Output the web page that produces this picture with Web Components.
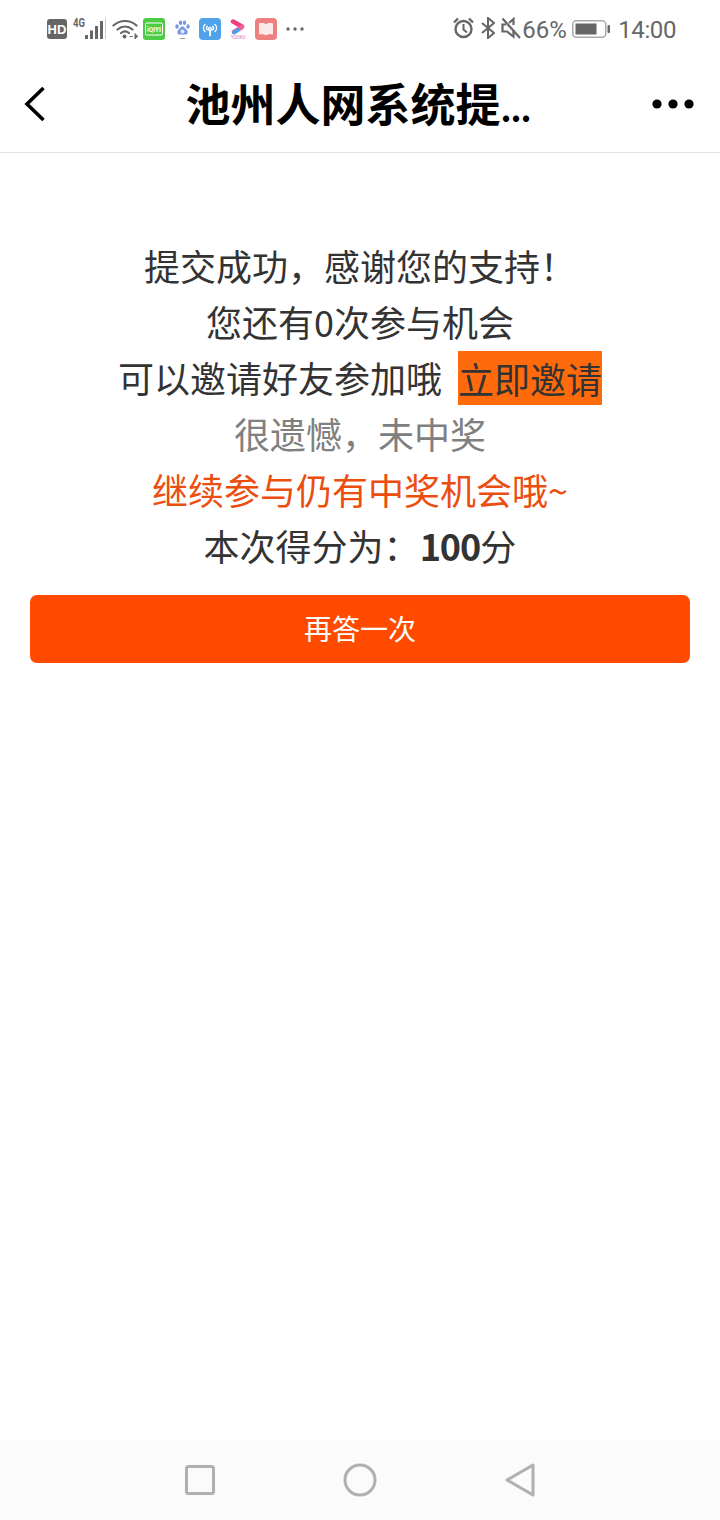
<!DOCTYPE html>
<html lang="zh">
<head>
<meta charset="utf-8">
<title>提交成功</title>
<style>
  html, body { margin: 0; padding: 0; background: #fff; }
  body { width: 720px; height: 1520px; display: flex; flex-direction: column; font-family: "Noto Sans CJK SC", "Noto Sans", sans-serif; overflow: hidden; }
  result-panel { flex: 1; }
  b { letter-spacing: -1px; }
</style>
</head>
<body>
<status-bar></status-bar>
<nav-bar>池州人网系统提<span style="font-size:34px;letter-spacing:-1px">...</span></nav-bar>
<result-panel>
  <result-line>提交成功&#xFF0C;感谢您的支持&#xFF01;</result-line>
  <result-line>您还有0次参与机会</result-line>
  <result-line>可以邀请好友参加哦&nbsp;&nbsp;<invite-tag>立即邀请</invite-tag></result-line>
  <result-line tone="muted">很遗憾&#xFF0C;未中奖</result-line>
  <result-line tone="accent">继续参与仍有中奖机会哦~</result-line>
  <result-line>本次得分为&#xFF1A;<b>100</b>分</result-line>
  <action-button slot="action">再答一次</action-button>
</result-panel>
<soft-keys></soft-keys>

<script>
class StatusBar extends HTMLElement {
  constructor() {
    super();
    this.attachShadow({ mode: 'open' });
    this.shadowRoot.innerHTML = `
      <style>
        :host { display: flex; box-sizing: border-box; height: 56px; padding: 0 44px 0 47px; align-items: flex-start; justify-content: space-between; color: #666; font-family: "Roboto", "Noto Sans", sans-serif; }
        .side { display: flex; align-items: flex-start; padding-top: 16px; }
        svg { display: block; flex: none; }
        .txt { font-size: 24px; line-height: 26px; height: 26px; margin-top: 1px; }
      </style>
      <div class="side">
        <!-- HD -->
        <svg width="20" height="20" style="margin-top:3px"><rect width="20" height="20" rx="3" fill="#666"/><text x="10" y="15" text-anchor="middle" font-size="13" font-weight="700" fill="#fff" font-family="Liberation Sans">HD</text></svg>
        <!-- 4G + signal -->
        <svg width="34" height="24" style="margin-left:5px;margin-top:1px">
          <text x="1" y="10" font-size="12" font-weight="700" fill="#666" font-family="Roboto" textLength="12" lengthAdjust="spacingAndGlyphs">4G</text>
          <rect x="13" y="18" width="3" height="4" fill="#666"/><rect x="18" y="13.500" width="3" height="8.500" fill="#666"/><rect x="23" y="9" width="3" height="13" fill="#666"/><rect x="28" y="4" width="3" height="18" fill="#666"/><rect x="33" y="1" width="1.500" height="21" fill="#ccc"/>
        </svg>
        <!-- wifi -->
        <svg width="26" height="22" style="margin-left:6px;margin-top:2px" fill="none" stroke="#666" stroke-width="2.200" stroke-linecap="round">
          <path d="M1.500 7.500C8 1.500 18 1.500 24.500 7.500"/><path d="M5.500 11.500C10 7.500 16 7.500 20.500 11.500"/><path d="M9 15C11.500 13 14.500 13 17 15"/>
          <circle cx="12.500" cy="18.500" r="2" fill="#666" stroke="none"/><path d="M18 18.500h2.500M23 16v5l2.500-2.500z" stroke-width="1" fill="#666"/>
        </svg>
        <!-- iqiyi -->
        <svg width="22" height="22" style="margin-left:5px;margin-top:2px"><rect width="22" height="22" rx="3" fill="#4fcc46"/><rect x="2.500" y="5" width="17" height="12" rx="1.500" fill="none" stroke="#fff" stroke-width="1"/><text x="11" y="14" text-anchor="middle" font-size="8" font-weight="700" fill="#fff" font-family="Roboto" textLength="14" lengthAdjust="spacingAndGlyphs">iQIYI</text></svg>
        <!-- baidu paw -->
        <svg width="15" height="20" style="margin-left:10px;margin-top:4px" fill="#7a97e2">
          <ellipse cx="2" cy="6.500" rx="1.700" ry="2.200"/><ellipse cx="5.500" cy="2.800" rx="1.700" ry="2.300"/><ellipse cx="9.500" cy="2.800" rx="1.700" ry="2.300"/><ellipse cx="13" cy="6.500" rx="1.700" ry="2.200"/>
          <path d="M7.500 6.500c-2 0-2.500 2-4 3.200C1.800 11 1.800 14.500 4.500 14.500h6c2.700 0 2.700-3.500 1-4.800C10 8.500 9.500 6.500 7.500 6.500z"/>
          <circle cx="7.500" cy="11.500" r="2" fill="#dfe7fa"/><rect x="5" y="18" width="5" height="1" fill="#999"/>
        </svg>
        <!-- wifi key -->
        <svg width="22" height="22" style="margin-left:9px;margin-top:2px"><rect width="22" height="22" rx="4" fill="#4fa3ea"/><g fill="none" stroke="#fff" stroke-width="1.400" stroke-linecap="round"><path d="M6 6.500c-2 2-2 5 0 7M16 6.500c2 2 2 5 0 7M8.300 8.200c-1 1-1 2.600 0 3.600M13.700 8.200c1 1 1 2.600 0 3.600"/><circle cx="11" cy="11" r="1.500"/><path d="M11 12.500v5" stroke-width="1.800"/></g></svg>
        <!-- youku -->
        <svg width="18" height="20" style="margin-left:8px;margin-top:3px" fill="none">
          <path d="M4 2.500L13 7.500" stroke="#ef3f7f" stroke-width="4.500" stroke-linecap="round"/><path d="M13 8L5 13" stroke="#f0609a" stroke-width="4.500" stroke-linecap="round"/><path d="M9 11L5 13.500" stroke="#3aa4f0" stroke-width="3.500" stroke-linecap="round"/>
          <text x="9" y="19.500" text-anchor="middle" font-size="4.500" fill="#c86fb0" font-family="Roboto">YOUKU</text>
        </svg>
        <!-- reader book -->
        <svg width="22" height="22" style="margin-left:8px;margin-top:2px"><rect width="22" height="22" rx="4" fill="#ee8080"/><path d="M4 5.500c3-.8 5.500-.5 7 1 1.500-1.500 4-1.800 7-1v11c-3-.6-5.500-.3-7 1-1.500-1.300-4-1.600-7-1z" fill="#fbeaea"/></svg>
        <!-- overflow -->
        <svg width="18" height="6" style="margin-left:9px;margin-top:10px" fill="#666"><circle cx="2" cy="3" r="1.700"/><circle cx="9" cy="3" r="1.700"/><circle cx="16" cy="3" r="1.700"/></svg>
      </div>
      <div class="side">
        <!-- alarm -->
        <svg width="21" height="22" style="margin-top:1px" fill="none" stroke="#666" stroke-width="2.400">
          <circle cx="10.500" cy="12" r="8"/><path d="M10.500 7v5.500l3.500 3" stroke-width="2"/><path d="M1 5.500L5 1.500M20 5.500L16 1.500"/>
        </svg>
        <!-- bluetooth -->
        <svg width="14" height="22" style="margin-left:7px;margin-top:1px" fill="none" stroke="#666" stroke-width="2">
          <path d="M1 6l12 10-6 5V1l6 5L1 16"/>
        </svg>
        <!-- muted speaker -->
        <svg width="20" height="22" style="margin-left:6px;margin-top:1px" fill="none" stroke="#666" stroke-width="2.200">
          <path d="M5 7.500H1.500v7H6l6.500 5V13M12.500 8V2L8 6"/><path d="M1.500 1.500l17.500 19.500"/>
        </svg>
        <span class="txt" style="margin-left:1px;width:43px">66%</span>
        <!-- battery -->
        <svg width="38" height="18" style="margin-left:7px;margin-top:4px">
          <rect x=".75" y=".75" width="33" height="16.500" rx="3.500" fill="#fff" stroke="#aaa" stroke-width="1.500"/>
          <rect x="3.500" y="3.500" width="21" height="11" fill="#666"/>
          <rect x="35.500" y="5" width="2.500" height="8" rx="1" fill="#666"/>
        </svg>
        <span class="txt" style="margin-left:8px;letter-spacing:-.4px">14:00</span>
      </div>
    `;
  }
}

class NavBar extends HTMLElement {
  constructor() {
    super();
    this.attachShadow({ mode: 'open' });
    this.shadowRoot.innerHTML = `
      <style>
        :host { display: grid; grid-template-columns: 100px 1fr 100px; align-items: center; box-sizing: border-box; height: 97px; border-bottom: 1px solid #e2e2e2; color: #000; }
        .back { padding-left: 24px; display: flex; }
        .more { padding-right: 26px; display: flex; justify-content: flex-end; }
        .title { text-align: center; font-size: 45px; font-weight: 700; line-height: 94px; height: 96px; padding-right: 4px; white-space: nowrap; }
        svg { display: block; }
      </style>
      <div class="back"><svg width="22" height="36" fill="none" stroke="#000" stroke-width="3.600"><path d="M19.500 2L3 18l16.500 16"/></svg></div>
      <div class="title"><slot></slot></div>
      <div class="more"><svg width="42" height="10" fill="#000"><circle cx="5" cy="5" r="4.600"/><circle cx="21" cy="5" r="4.600"/><circle cx="37" cy="5" r="4.600"/></svg></div>
    `;
  }
}

class ResultPanel extends HTMLElement {
  constructor() {
    super();
    this.attachShadow({ mode: 'open' });
    this.shadowRoot.innerHTML = `
      <style>
        :host { display: block; box-sizing: border-box; padding: 84px 30px 0; }
        .lines { display: flex; flex-direction: column; margin-bottom: 22px; }
      </style>
      <div class="lines"><slot></slot></div>
      <slot name="action"></slot>
    `;
  }
}

class ResultLine extends HTMLElement {
  constructor() {
    super();
    this.attachShadow({ mode: 'open' });
    this.shadowRoot.innerHTML = `
      <style>
        :host { display: block; text-align: center; font-size: 36px; line-height: 56px; height: 56px; color: #333; white-space: nowrap; }
        :host([tone="muted"]) { color: #808080; }
        :host([tone="accent"]) { color: #ec4e10; }
      </style>
      <slot></slot>
    `;
  }
}

class InviteTag extends HTMLElement {
  constructor() {
    super();
    this.attachShadow({ mode: 'open' });
    this.shadowRoot.innerHTML = `
      <style>
        :host { display: inline-block; background: #ff6a0c; color: #333; height: 54px; line-height: 54px; vertical-align: top; margin-top: 2px; }
      </style>
      <slot></slot>
    `;
  }
}

class ActionButton extends HTMLElement {
  constructor() {
    super();
    this.attachShadow({ mode: 'open' });
    this.shadowRoot.innerHTML = `
      <style>
        :host { display: flex; align-items: center; justify-content: center; box-sizing: border-box; height: 68px; padding-bottom: 3px; border-radius: 7px; background: #ff4a00; color: #fff; font-size: 28px; }
      </style>
      <slot></slot>
    `;
  }
}

class SoftKeys extends HTMLElement {
  constructor() {
    super();
    this.attachShadow({ mode: 'open' });
    this.shadowRoot.innerHTML = `
      <style>
        :host { display: grid; grid-template-columns: repeat(3, 160px); justify-content: center; justify-items: center; align-items: center; height: 80px; background: #fbfbfb; }
        svg { display: block; }
      </style>
      <svg width="30" height="30" fill="none" stroke="#b0b0b0" stroke-width="3"><rect x="1.500" y="1.500" width="27" height="27" rx="2"/></svg>
      <svg width="34" height="34" fill="none" stroke="#b0b0b0" stroke-width="3"><circle cx="17" cy="17" r="15"/></svg>
      <svg width="30" height="34" fill="none" stroke="#b0b0b0" stroke-width="3" stroke-linejoin="round"><path d="M2 17L28 2v30z"/></svg>
    `;
  }
}

customElements.define('status-bar', StatusBar);
customElements.define('nav-bar', NavBar);
customElements.define('result-panel', ResultPanel);
customElements.define('result-line', ResultLine);
customElements.define('invite-tag', InviteTag);
customElements.define('action-button', ActionButton);
customElements.define('soft-keys', SoftKeys);
</script>
</body>
</html>
